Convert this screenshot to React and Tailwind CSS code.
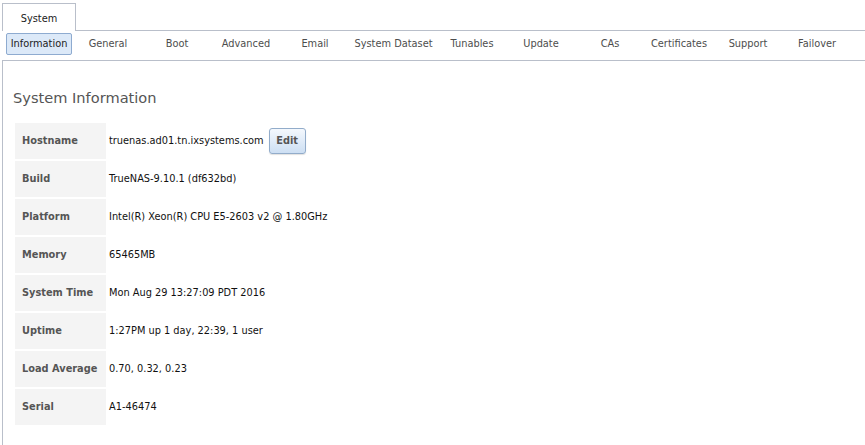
import React from 'react';

const SUB_TABS = [
  { label: 'Information', active: true },
  { label: 'General' },
  { label: 'Boot' },
  { label: 'Advanced' },
  { label: 'Email' },
  { label: 'System Dataset', wide: true },
  { label: 'Tunables' },
  { label: 'Update' },
  { label: 'CAs' },
  { label: 'Certificates' },
  { label: 'Support' },
  { label: 'Failover' },
];

const ROWS = [
  { label: 'Hostname', value: 'truenas.ad01.tn.ixsystems.com', edit: true },
  { label: 'Build', value: 'TrueNAS-9.10.1 (df632bd)' },
  { label: 'Platform', value: 'Intel(R) Xeon(R) CPU E5-2603 v2 @ 1.80GHz' },
  { label: 'Memory', value: '65465MB' },
  { label: 'System Time', value: 'Mon Aug 29 13:27:09 PDT 2016' },
  { label: 'Uptime', value: '1:27PM up 1 day, 22:39, 1 user' },
  { label: 'Load Average', value: '0.70, 0.32, 0.23' },
  { label: 'Serial', value: 'A1-46474' },
];

const App = () => {
  return (
    <div className="w-[865px] h-[445px] overflow-hidden bg-white font-['DejaVu_Sans',sans-serif] text-[9.8px] text-[#222]">
      {/* top tab strip */}
      <div className="flex items-end h-[31px]">
        <div className="ml-[2px] w-[74px] h-[28px] pt-[3px] border-t border-l border-r border-[#b9bfca] flex items-center justify-center text-[#222]">
          System
        </div>
        <div className="flex-1 h-full border-b border-[#b9bfca]"></div>
      </div>

      {/* sub tabs */}
      <div className="flex items-start h-[29px] pt-[2px] pl-[6px] gap-[3px]">
        {SUB_TABS.map(tab => (
          <div
            key={tab.label}
            className={`flex-shrink-0 h-[22px] flex items-center justify-center whitespace-nowrap ${
              tab.wide ? 'w-[85px]' : 'w-[66px]'
            } ${
              tab.active
                ? 'bg-[#dce9f8] border border-[#8eabd0] rounded-[2px] text-[#222]'
                : 'text-[#4d4d4d]'
            }`}
          >
            {tab.label}
          </div>
        ))}
      </div>

      {/* content panel */}
      <div className="ml-[2px] h-full border-t border-l border-[#b9bfca]">
        <h2 className="ml-[10px] mt-[28px] text-[14.6px] leading-[18px] font-normal text-[#555]">
          System Information
        </h2>

        <div className="ml-[12px] mt-[16px] flex flex-col gap-[2px]">
          {ROWS.map(row => (
            <div key={row.label} className="flex h-[36px]">
              <div className="w-[91px] flex-shrink-0 bg-[#f4f4f4] pl-[7px] flex items-center font-bold text-[#555]">
                {row.label}
              </div>
              <div className="pl-[3px] flex items-center text-[#111]">
                {row.value}
                {row.edit && (
                  <button className="ml-[5px] w-[37px] h-[26px] rounded-[3px] border border-[#92acca] bg-gradient-to-b from-[#f4f8fd] to-[#cddff3] shadow-[0_1px_1px_rgba(0,0,0,0.12)] font-bold text-[#555] text-[9.8px]">
                    Edit
                  </button>
                )}
              </div>
            </div>
          ))}
        </div>
      </div>
    </div>
  );
};

export default App;
